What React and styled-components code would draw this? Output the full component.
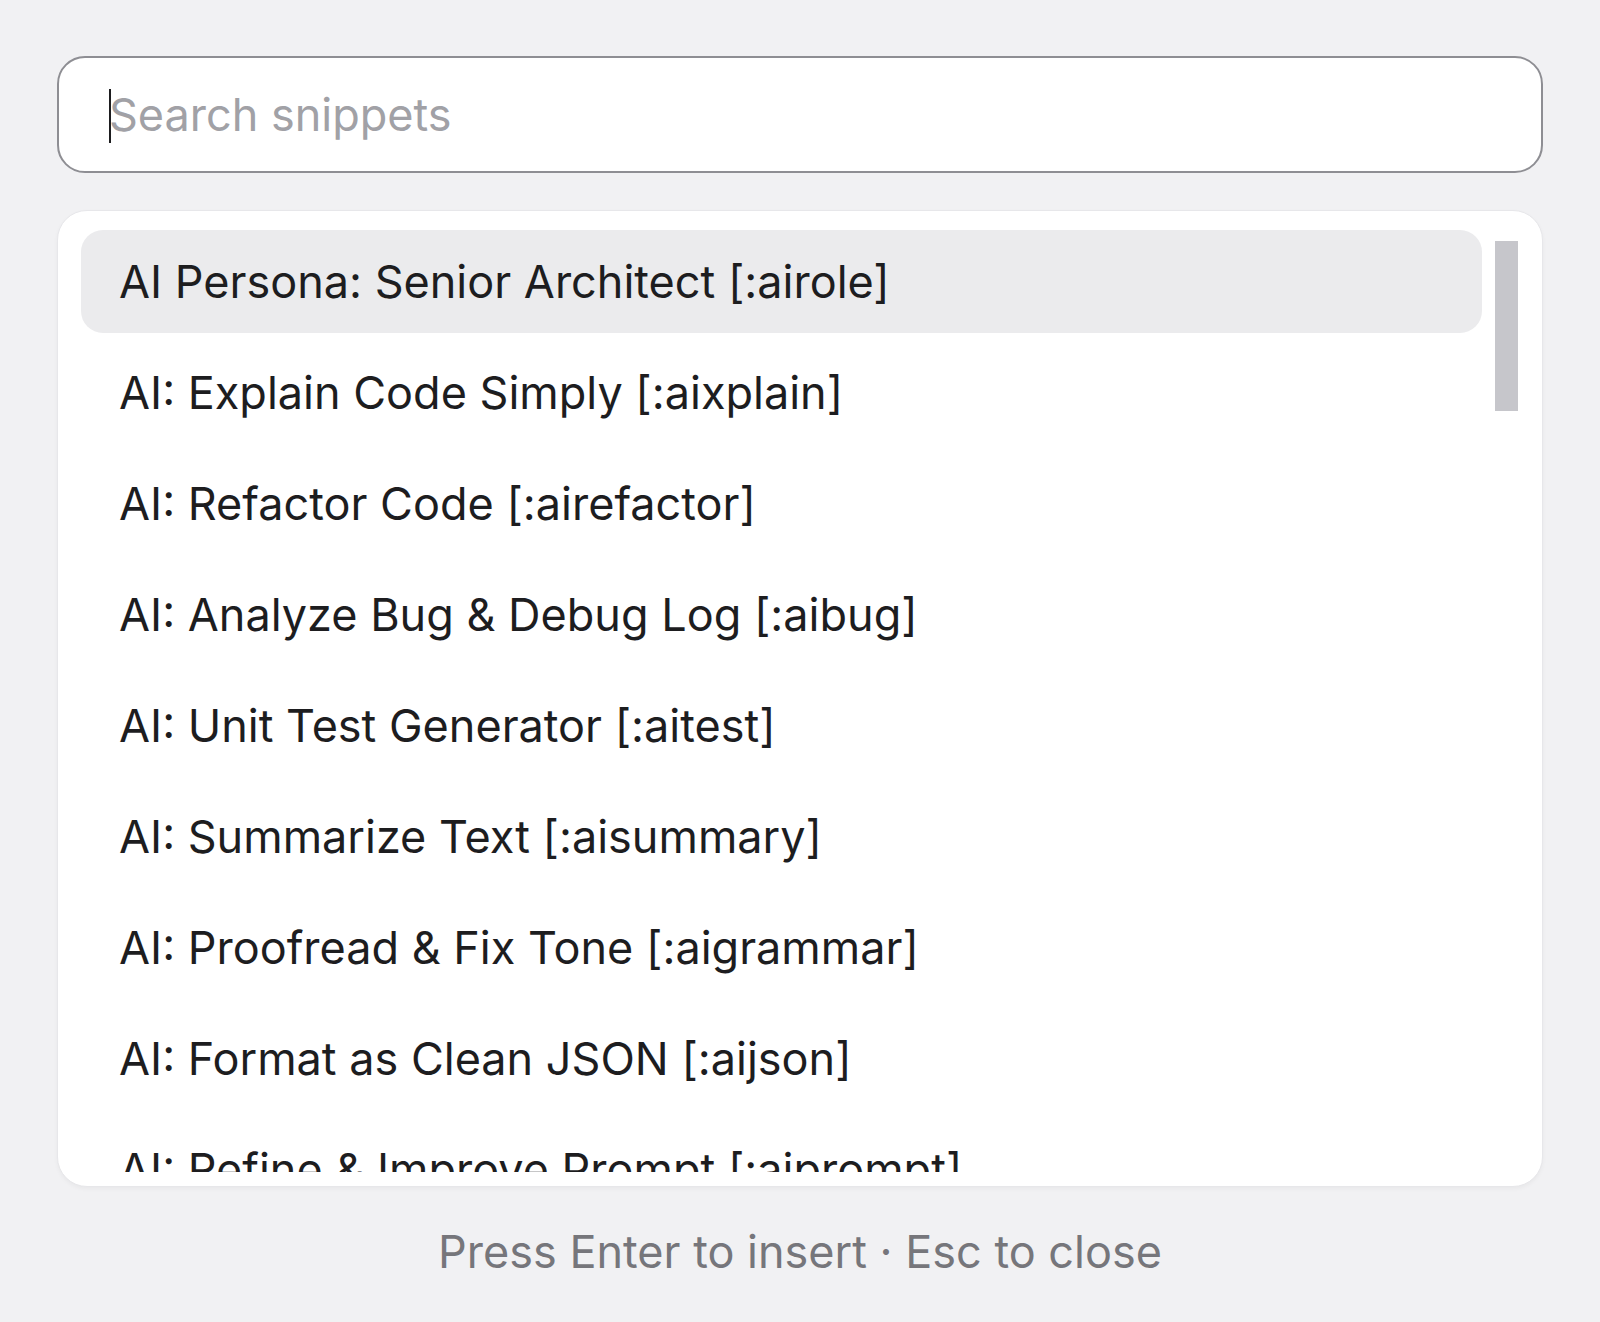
import React, {useState, useRef, useEffect} from 'react';
import styled, {createGlobalStyle} from "styled-components";

const GlobalStyle = createGlobalStyle`
  html, body {
    margin: 0;
    padding: 0;
    background: #f1f1f3;
  }

  body {
    font-family: Inter, "Noto Sans", "Liberation Sans", sans-serif;
    -webkit-font-smoothing: antialiased;
  }
`;

const snippets = [
    {name: 'AI Persona: Senior Architect', key: 'airole'},
    {name: 'AI: Explain Code Simply', key: 'aixplain'},
    {name: 'AI: Refactor Code', key: 'airefactor'},
    {name: 'AI: Analyze Bug & Debug Log', key: 'aibug'},
    {name: 'AI: Unit Test Generator', key: 'aitest'},
    {name: 'AI: Summarize Text', key: 'aisummary'},
    {name: 'AI: Proofread & Fix Tone', key: 'aigrammar'},
    {name: 'AI: Format as Clean JSON', key: 'aijson'},
    {name: 'AI: Refine & Improve Prompt', key: 'aiprompt'},
    {name: 'AI: Write Commit Message', key: 'aicommit'},
    {name: 'AI: Translate to English', key: 'aitranslate'},
    {name: 'AI: Generate Docstrings', key: 'aidocs'},
    {name: 'AI: Code Review Checklist', key: 'aireview'},
    {name: 'AI: Convert to TypeScript', key: 'aits'},
    {name: 'AI: Write SQL Query', key: 'aisql'},
    {name: 'AI: Optimize Performance', key: 'aiperf'},
    {name: 'AI: Security Audit', key: 'aisec'},
    {name: 'AI: Regex Helper', key: 'airegex'},
    {name: 'Date: Today ISO', key: 'date'},
    {name: 'Date: Current Time', key: 'time'},
    {name: 'Email: Polite Follow-up', key: 'followup'},
    {name: 'Email: Meeting Request', key: 'meet'},
    {name: 'Email: Thank You Note', key: 'thanks'},
    {name: 'Email: Out of Office', key: 'ooo'},
    {name: 'Email: Signature', key: 'sig'},
    {name: 'Git: Conventional Commit', key: 'gcommit'},
    {name: 'Git: Pull Request Template', key: 'gpr'},
    {name: 'Git: Release Notes', key: 'grelease'},
    {name: 'Markdown: Table Template', key: 'mdtable'},
    {name: 'Markdown: Code Block', key: 'mdcode'},
    {name: 'Markdown: Checklist', key: 'mdtodo'},
    {name: 'Markdown: Callout Note', key: 'mdnote'},
    {name: 'JS: Console Log', key: 'clog'},
    {name: 'JS: Arrow Function', key: 'afn'},
    {name: 'JS: Async Try/Catch', key: 'atry'},
    {name: 'JS: Fetch JSON', key: 'fetchj'},
    {name: 'React: Functional Component', key: 'rfc'},
    {name: 'React: useEffect Hook', key: 'ueff'},
    {name: 'React: useState Hook', key: 'ustate'},
    {name: 'CSS: Flex Center', key: 'flexc'},
    {name: 'CSS: Grid Layout', key: 'gridl'},
    {name: 'Shell: Find Large Files', key: 'bigfiles'},
    {name: 'Shell: Kill Port', key: 'killport'},
    {name: 'Docker: Compose Service', key: 'dcomp'},
    {name: 'Address: Home', key: 'addr'},
    {name: 'Phone: Mobile Number', key: 'phone'},
];

const TRACK_PAD = 11;

const WrapperStyle = styled.div`
  display: flex;
  flex-direction: column;
  padding: 56px 57px 0;
  height: 1322px;
  box-sizing: border-box;
`;

const SearchBox = styled.div`
  position: relative;
  height: 117px;
  box-sizing: border-box;
  border: 2px solid #8e8e93;
  border-radius: 28px;
  background: #fff;
  display: flex;
  align-items: center;
`;

const SearchInput = styled.input`
  flex: 1;
  height: 100%;
  border: none;
  outline: none;
  background: transparent;
  padding: 0 0 0 50px;
  font-family: inherit;
  font-size: 45px;
  color: #1d1d1f;
  caret-color: transparent;

  &::placeholder {
    color: #a1a1a6;
  }
`;

// static caret so the screenshot doesn't depend on the blink
const Caret = styled.span`
  position: absolute;
  left: 50px;
  top: 31px;
  width: 2px;
  height: 54px;
  background: #1d1d1f;
  pointer-events: none;
`;

const CardStyle = styled.div`
  margin-top: 37px;
  height: 977px;
  box-sizing: border-box;
  padding: 19px 23px 14px;
  background: #fff;
  border: 1px solid #e7e7ea;
  border-radius: 30px;
  box-shadow: 0 2px 4px rgba(0, 0, 0, 0.04);
  display: flex;
`;

const ListStyle = styled.div`
  flex: 1;
  min-width: 0;
  overflow-y: auto;
  display: flex;
  flex-direction: column;
  gap: 8px;
  scrollbar-width: none;

  &::-webkit-scrollbar {
    display: none;
  }
`;

const TrackStyle = styled.div`
  flex: 0 0 24px;
  margin-left: 13px;
  padding: ${TRACK_PAD}px 0;
  box-sizing: border-box;
`;

const ThumbStyle = styled.div`
  width: 23px;
  background: #c6c6cb;
`;

const ItemStyle = styled.div`
  flex: 0 0 103px;
  display: flex;
  align-items: center;
  padding: 0 38px;
  border-radius: 22px;
  font-size: 45px;
  color: #1d1d1f;
  white-space: nowrap;
  background: ${props => props.$active ? '#ebebed' : 'transparent'};
  cursor: default;
`;

const FooterStyle = styled.div`
  margin-top: 40px;
  text-align: center;
  font-size: 45px;
  line-height: 50px;
  color: #76767b;
`;

export default function App() {
    const [query, setQuery] = useState('');
    const [active, setActive] = useState(0);
    const [thumb, setThumb] = useState({top: 0, height: 170});
    const listRef = useRef(null);

    const filtered = snippets.filter(s =>
        (s.name + ' ' + s.key).toLowerCase().includes(query.toLowerCase())
    );

    const updateThumb = () => {
        const el = listRef.current;
        if (!el) return;
        const track = el.clientHeight - TRACK_PAD * 2;
        const height = el.scrollHeight > el.clientHeight
            ? track * el.clientHeight / el.scrollHeight : 0;
        const max = el.scrollHeight - el.clientHeight;
        const top = max > 0 ? (track - height) * el.scrollTop / max : 0;
        setThumb({top, height});
    };

    useEffect(() => {
        updateThumb();
    }, [filtered.length]);

    return (
        <>
            <GlobalStyle/>
            <WrapperStyle>
                <SearchBox>
                    <SearchInput
                        value={query}
                        onChange={e => setQuery(e.target.value)}
                        placeholder={"Search snippets"}
                        autoComplete={"off"}
                    />
                    {!query && <Caret/>}
                </SearchBox>
                <CardStyle>
                    <ListStyle ref={listRef} onScroll={updateThumb}>
                        {
                            filtered.map((s, i) =>
                                <ItemStyle key={s.key} $active={i === active}
                                           onMouseEnter={() => setActive(i)}>
                                    {s.name} [:{s.key}]
                                </ItemStyle>)
                        }
                    </ListStyle>
                    <TrackStyle>
                        <ThumbStyle style={{marginTop: thumb.top, height: thumb.height}}/>
                    </TrackStyle>
                </CardStyle>
                <FooterStyle>Press Enter to insert · Esc to close</FooterStyle>
            </WrapperStyle>
        </>
    );
}
